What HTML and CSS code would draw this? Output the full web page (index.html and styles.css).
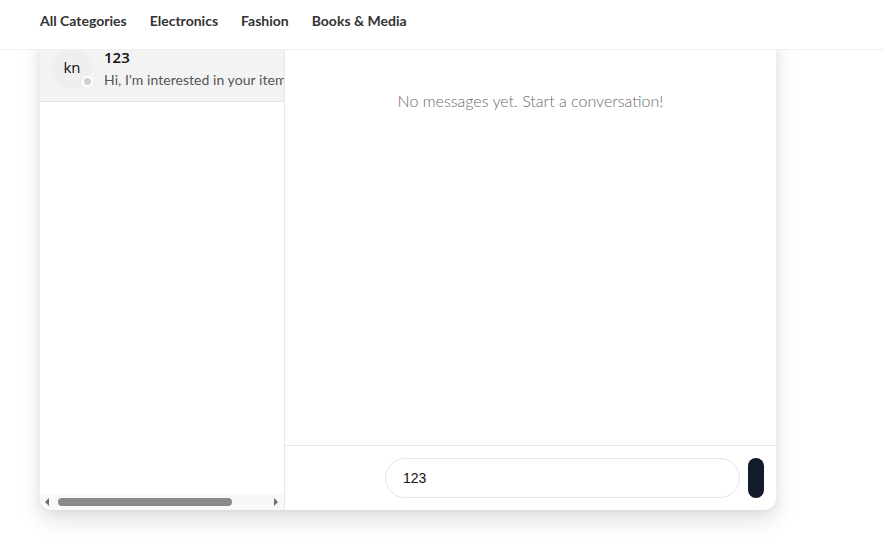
FILE: index.html
```html
<!DOCTYPE html>
<html>
<head>
<meta charset="utf-8">
<link rel="stylesheet" href="styles.css">
</head>
<body>
<header class="topbar">
  <nav class="cats">
    <a class="cat">All Categories</a>
    <a class="cat">Electronics</a>
    <a class="cat">Fashion</a>
    <a class="cat">Books &amp; Media</a>
  </nav>
</header>
<main class="page">
  <section class="card">
    <aside class="sidebar">
      <div class="convs">
        <div class="conv active">
          <div class="avatar">kn<span class="dot"></span></div>
          <div class="conv-text">
            <div class="conv-name">123</div>
            <div class="conv-last">Hi, I'm interested in your item</div>
          </div>
        </div>
      </div>
      <div class="hscroll">
        <span class="arrow left"></span>
        <div class="track"><div class="thumb"></div></div>
        <span class="arrow right"></span>
      </div>
    </aside>
    <div class="chat">
      <div class="messages">
        <p class="empty">No messages yet. Start a conversation!</p>
      </div>
      <form class="composer">
        <div class="input">123</div>
        <button class="send" type="button"></button>
      </form>
    </div>
  </section>
</main>
</body>
</html>
```
FILE: styles.css
```css
* { box-sizing: border-box; }
html, body { margin: 0; padding: 0; background: #fff; }
body { font-family: "Open Sans", "Noto Sans", sans-serif; color: #111; }

.topbar {
  position: fixed;
  top: 0; left: 0; right: 0;
  height: 50px;
  background: #fff;
  border-bottom: 1px solid #f0f0f0;
  z-index: 10;
}
.cats {
  display: flex;
  gap: 23px;
  padding-left: 40px;
  height: 49px;
  align-items: center;
}
.cat {
  font-family: "Lato", sans-serif;
  font-weight: 700;
  font-size: 14px;
  color: #333;
  padding-bottom: 8px;
}

.page { padding: 36px 108px 40px 40px; }
.card {
  display: flex;
  width: 736px;
  height: 474px;
  background: #fff;
  border-radius: 0 0 12px 12px;
  box-shadow: 0 10px 25px rgba(0,0,0,0.12), 0 3px 8px rgba(0,0,0,0.05);
  overflow: hidden;
}

.sidebar {
  width: 245px;
  border-right: 1px solid #e6e6e6;
  display: flex;
  flex-direction: column;
}
.convs { flex: 1; overflow: hidden; }
.conv {
  display: flex;
  gap: 12px;
  padding: 13px 12px 12px;
  background: #f3f3f3;
  border-bottom: 1px solid #e4e4e4;
  width: 270px;
  height: 66px;
}
.avatar {
  position: relative;
  flex: none;
  width: 40px; height: 40px;
  border-radius: 50%;
  background: #efefef;
  display: flex;
  align-items: center;
  justify-content: center;
  font-family: "Open Sans", sans-serif;
  font-size: 15px;
  color: #111;
  padding-bottom: 4px;
}
.dot {
  position: absolute;
  right: -1px; bottom: 2px;
  width: 11px; height: 11px;
  border-radius: 50%;
  background: #cfcfcf;
  border: 2px solid #fff;
}
.conv-text { white-space: nowrap; margin-top: -2px; }
.conv-name { font-family: "Open Sans", sans-serif; font-weight: 600; font-size: 15px; color: #111; line-height: 20px; }
.conv-last { font-family: "Lato", sans-serif; font-size: 14px; letter-spacing: 0.05px; color: #555; line-height: 20px; margin-top: 3px; }

.hscroll {
  height: 16px;
  background: #f8f8f8;
  display: flex;
  align-items: center;
  padding: 0 6px 0 5px;
}
.arrow { width: 0; height: 0; border-top: 4px solid transparent; border-bottom: 4px solid transparent; }
.arrow.left { border-right: 4px solid #6a6a6a; }
.arrow.right { border-left: 4px solid #6a6a6a; }
.track { flex: 1; padding: 0 9px 0 9px; }
.thumb { width: 174px; height: 8px; border-radius: 4px; background: #8a8a8a; }

.chat { flex: 1; display: flex; flex-direction: column; }
.messages { flex: 1; }
.empty {
  margin: 0;
  padding-top: 55px;
  text-align: center;
  font-family: "Lato", sans-serif;
  font-weight: 300;
  font-size: 16px;
  color: #6b6b6b;
}
.composer {
  margin: 0;
  border-top: 1px solid #e6e6e6;
  padding: 12px 12px 12px 0;
  display: flex;
  justify-content: flex-end;
  gap: 8px;
}
.input {
  width: 355px;
  height: 40px;
  border: 1px solid #e5e5e5;
  border-radius: 20px;
  padding: 0 17px;
  display: flex;
  align-items: center;
  font-family: "Liberation Sans", sans-serif;
  font-size: 14px;
  color: #111;
}
.send {
  width: 16px;
  height: 40px;
  border: none;
  padding: 0;
  border-radius: 8px;
  background: #121a2c;
}
```
